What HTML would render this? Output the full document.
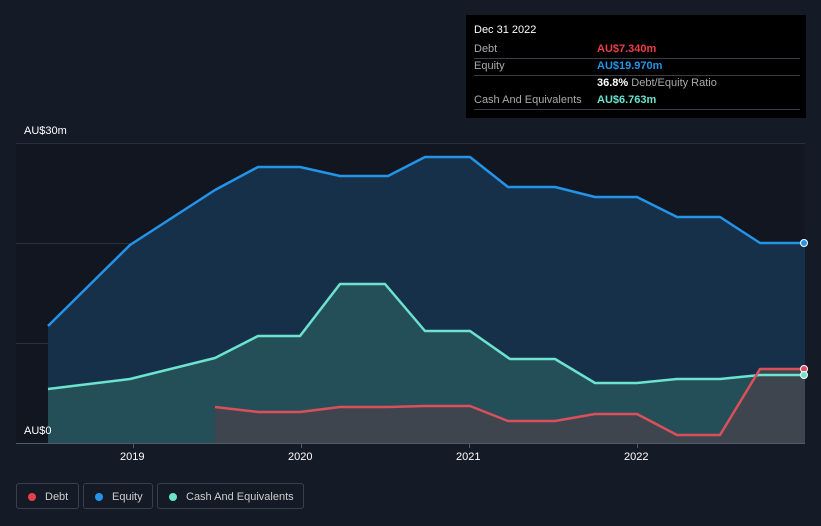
<!DOCTYPE html>
<html><head><meta charset="utf-8"><style>
body{margin:0;width:821px;height:526px;background:#151b26;font-family:"Liberation Sans",sans-serif;overflow:hidden;position:relative}
.tip{position:absolute;left:466px;top:15px;width:340px;height:103px;background:#000;color:#fff;font-size:11px}
.tip .r{position:absolute;left:8px;right:6px;height:17px;border-bottom:1px solid #3a3d44;line-height:17px;color:#aaa}
.tip .v{position:absolute;left:123px}
.leg{position:absolute;top:483px;height:26px;border:1px solid #3a3f4a;border-radius:3px;color:#ccc;font-size:11px;line-height:26px;box-sizing:border-box}
.leg i{position:absolute;left:11px;top:9px;width:8px;height:8px;border-radius:50%}
.leg span{position:absolute;left:28px}
.ax{position:absolute;color:#fff;font-size:11px}
</style></head><body>
<svg width="821" height="526" style="position:absolute;left:0;top:0">
<rect x="16" y="143" width="789" height="300" fill="#111620"/>
<line x1="16" y1="143.5" x2="805" y2="143.5" stroke="#2a2f3a"/>
<line x1="16" y1="243.5" x2="805" y2="243.5" stroke="#2a2f3a"/>
<line x1="16" y1="343.5" x2="805" y2="343.5" stroke="#2a2f3a"/>
<polygon fill="#17304a" points="48,326 130,245 215,190 258,167 300,167 340,176 388,176 425,157 470,157 508,187 555,187 595,197 637,197 677,217 720,217 760,243 805,243 805,443 48,443"/>
<polygon fill="#254f58" points="48,389 130,379 215,358 258,336 300,336 340,284 385,284 425,331 470,331 510,359 555,359 595,383 637,383 677,379 720,379 760,375 805,375 805,443 48,443"/>
<polygon fill="#3f454e" points="215,407 258,412 300,412 340,407 388,407 425,406 470,406 508,421 555,421 595,414 637,414 677,435 720,435 760,369 805,369 805,443 215,443"/>
<g fill="none" stroke-width="2.5" stroke-linejoin="round">
<polyline stroke="#2394e8" points="48,326 130,245 215,190 258,167 300,167 340,176 388,176 425,157 470,157 508,187 555,187 595,197 637,197 677,217 720,217 760,243 805,243"/>
<polyline stroke="#6be3cf" points="48,389 130,379 215,358 258,336 300,336 340,284 385,284 425,331 470,331 510,359 555,359 595,383 637,383 677,379 720,379 760,375 805,375"/>
<polyline stroke="#d9505a" points="215,407 258,412 300,412 340,407 388,407 425,406 470,406 508,421 555,421 595,414 637,414 677,435 720,435 760,369 805,369"/>
</g>
<circle cx="804" cy="243" r="3.5" fill="#2394e8" stroke="#fff"/>
<circle cx="804" cy="369" r="3.5" fill="#d9505a" stroke="#fff"/>
<circle cx="804" cy="375" r="3.5" fill="#6be3cf" stroke="#fff"/>
<line x1="16" y1="443.5" x2="805" y2="443.5" stroke="#555a64"/>
<g stroke="#555a64"><line x1="133.5" y1="443" x2="133.5" y2="448"/><line x1="301.5" y1="443" x2="301.5" y2="448"/><line x1="469.5" y1="443" x2="469.5" y2="448"/><line x1="637.5" y1="443" x2="637.5" y2="448"/></g>
</svg>
<div class="ax" style="left:24px;top:125px">AU$30m</div>
<div class="ax" style="left:24px;top:425px">AU$0</div>
<div class="ax" style="left:120px;top:451px">2019</div>
<div class="ax" style="left:288px;top:451px">2020</div>
<div class="ax" style="left:456px;top:451px">2021</div>
<div class="ax" style="left:624px;top:451px">2022</div>
<div class="tip">
<div style="position:absolute;left:8px;top:9px;color:#fff">Dec 31 2022</div>
<div class="r" style="top:26px">Debt<span class="v" style="color:#e8404a;font-weight:bold">AU$7.340m</span></div>
<div class="r" style="top:43px">Equity<span class="v" style="color:#2394e8;font-weight:bold">AU$19.970m</span></div>
<div class="r" style="top:60px;border:none"><span class="v" style="color:#fff"><b>36.8%</b> <span style="color:#aaa">Debt/Equity Ratio</span></span></div>
<div class="r" style="top:77px">Cash And Equivalents<span class="v" style="color:#6be3cf;font-weight:bold">AU$6.763m</span></div>
</div>
<div class="leg" style="left:16px;width:63px"><i style="background:#e8404a"></i><span>Debt</span></div>
<div class="leg" style="left:83px;width:70px"><i style="background:#2394e8"></i><span>Equity</span></div>
<div class="leg" style="left:157px;width:147px"><i style="background:#6be3cf"></i><span>Cash And Equivalents</span></div>
</body></html>
